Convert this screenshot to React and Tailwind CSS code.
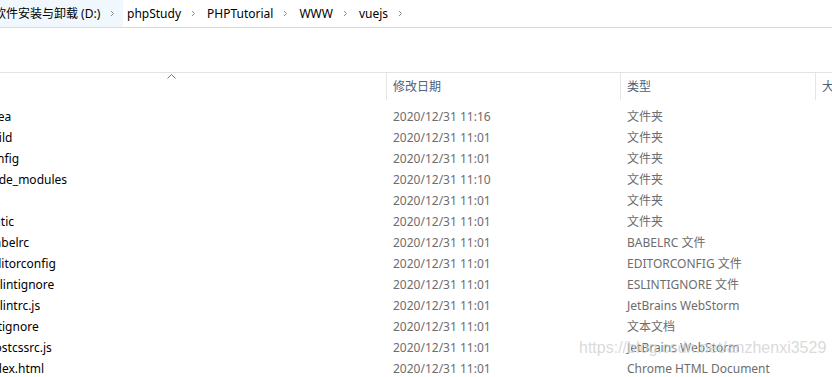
import React from "react";

/* ---------- Data ---------- */
const CRUMBS = ["phpStudy", "PHPTutorial", "WWW", "vuejs"];

const FILES = [
  { name: ".idea", date: "2020/12/31 11:16", type: "文件夹" },
  { name: "build", date: "2020/12/31 11:01", type: "文件夹" },
  { name: "config", date: "2020/12/31 11:01", type: "文件夹" },
  { name: "node_modules", date: "2020/12/31 11:10", type: "文件夹" },
  { name: "src", date: "2020/12/31 11:01", type: "文件夹" },
  { name: "static", date: "2020/12/31 11:01", type: "文件夹" },
  { name: ".babelrc", date: "2020/12/31 11:01", type: "BABELRC 文件" },
  { name: ".editorconfig", date: "2020/12/31 11:01", type: "EDITORCONFIG 文件" },
  { name: ".eslintignore", date: "2020/12/31 11:01", type: "ESLINTIGNORE 文件" },
  { name: ".eslintrc.js", date: "2020/12/31 11:01", type: "JetBrains WebStorm" },
  { name: ".gitignore", date: "2020/12/31 11:01", type: "文本文档" },
  { name: ".postcssrc.js", date: "2020/12/31 11:01", type: "JetBrains WebStorm" },
  { name: "index.html", date: "2020/12/31 11:01", type: "Chrome HTML Document" },
];

/* ---------- Small chevron between crumbs ---------- */
function Chevron() {
  return (
    <svg width="5" height="7" viewBox="0 0 5 7" className="shrink-0">
      <path d="M1 1 L3.5 3.5 L1 6" fill="none" stroke="#8a8a8a" strokeWidth="1" />
    </svg>
  );
}

export default function App() {
  return (
    <div
      className="relative w-[832px] h-[377px] overflow-hidden bg-white text-[12px]"
      style={{ fontFamily: '"Noto Sans", "Noto Sans CJK SC", sans-serif' }}
    >
      {/* Address bar */}
      <div className="flex items-center h-[28px] border-b border-[#d9d9d9] text-black">
        <div className="flex items-center h-full w-[123px] bg-[#f0f7fd] gap-[10px]">
          <span className="ml-[-6px] whitespace-nowrap">软件安装与卸载 (D:)</span>
          <Chevron />
        </div>
        {CRUMBS.map((c) => (
          <div key={c} className="flex items-center h-full pl-[4px] pr-[7px] gap-[10px]">
            <span className="whitespace-nowrap">{c}</span>
            <Chevron />
          </div>
        ))}
      </div>

      {/* Empty band under the address bar */}
      <div className="h-[44px]" />

      {/* Column headers */}
      <div className="flex h-[28px] border-t border-[#e3e3e3] text-[#4c607a] whitespace-nowrap">
        <div className="w-[386px] shrink-0 flex justify-center">
          <svg width="9" height="5" viewBox="0 0 9 5" className="mt-[1px] ml-[-44px]">
            <path d="M0.5 4.5 L4.5 0.5 L8.5 4.5" fill="none" stroke="#777" strokeWidth="1" />
          </svg>
        </div>
        <div className="w-[234px] shrink-0 border-l border-[#e5e5e5] pl-[6px] flex items-center">修改日期</div>
        <div className="w-[195px] shrink-0 border-l border-[#e5e5e5] pl-[6px] flex items-center">类型</div>
        <div className="flex-1 min-w-0 overflow-hidden border-l border-[#e5e5e5] pl-[6px] flex items-center">大小</div>
      </div>

      {/* Rows */}
      <div className="mt-[6px]">
        {FILES.map((f) => (
          <div key={f.name} className="flex h-[21px] items-center">
            <div className="w-[386px] shrink-0 overflow-hidden whitespace-nowrap text-black">
              <span className="ml-[-16px]">{f.name}</span>
            </div>
            <div className="w-[234px] shrink-0 pl-[7px] text-[#6d6d6d] whitespace-nowrap">{f.date}</div>
            <div className="w-[195px] shrink-0 pl-[7px] text-[#6d6d6d] whitespace-nowrap">{f.type}</div>
          </div>
        ))}
      </div>

      {/* Watermark */}
      <div
        className="absolute left-[579px] top-[340px] text-[16px] leading-none text-[#d0d0d0]/80 whitespace-nowrap pointer-events-none"
        style={{ fontFamily: '"Liberation Sans", sans-serif' }}
      >
        https://blog.csdn.net/anzhenxi3529
      </div>
    </div>
  );
}
